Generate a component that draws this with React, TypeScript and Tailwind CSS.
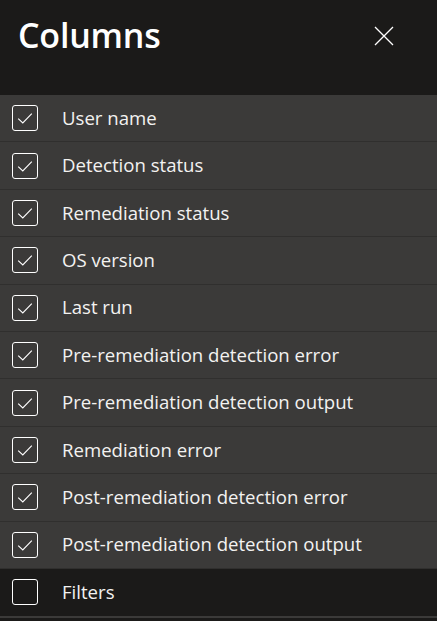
import React, { useState } from 'react';

type Column = { label: string; checked: boolean };

const initialColumns: Column[] = [
  { label: 'User name', checked: true },
  { label: 'Detection status', checked: true },
  { label: 'Remediation status', checked: true },
  { label: 'OS version', checked: true },
  { label: 'Last run', checked: true },
  { label: 'Pre-remediation detection error', checked: true },
  { label: 'Pre-remediation detection output', checked: true },
  { label: 'Remediation error', checked: true },
  { label: 'Post-remediation detection error', checked: true },
  { label: 'Post-remediation detection output', checked: true },
];

const CheckBox: React.FC<{ checked: boolean }> = ({ checked }) => (
  <span className="flex h-[26px] w-[26px] shrink-0 items-center justify-center rounded-[3px] border border-white">
    {checked && (
      <svg width="18" height="18" viewBox="0 0 18 18" fill="none">
        <path d="M2.2 9.6 L6.8 14 L15.8 4.6" stroke="#ffffff" strokeWidth="1.1" />
      </svg>
    )}
  </span>
);

export default function App() {
  const [columns, setColumns] = useState<Column[]>(initialColumns);
  const [filters, setFilters] = useState(false);

  const toggle = (i: number) => {
    setColumns(columns.map((c, idx) => (idx === i ? { ...c, checked: !c.checked } : c)));
  };

  return (
    <div
      className="min-h-[621px] w-full bg-[#1b1a19] text-white"
      style={{ fontFamily: '"Open Sans", "Noto Sans", sans-serif' }}
    >
      <div className="flex h-[95px] items-start justify-between pl-[18px] pr-[43px] pt-[11px]">
        <h1 className="text-[34px] font-semibold leading-[48px] tracking-[-0.2px]">Columns</h1>
        <button className="mt-[15px] flex h-[20px] w-[20px] items-center justify-center">
          <svg width="20" height="20" viewBox="0 0 20 20" fill="none">
            <path d="M1 1 L19 19 M19 1 L1 19" stroke="#ffffff" strokeWidth="1.3" />
          </svg>
        </button>
      </div>

      <ul>
        {columns.map((c, i) => (
          <li
            key={c.label}
            onClick={() => toggle(i)}
            className="flex h-[47.4px] cursor-pointer items-center gap-[24px] border-b border-[#302f2e] bg-[#3b3a39] pl-[12px]"
          >
            <CheckBox checked={c.checked} />
            <span className="text-[18.6px] leading-none text-[#f3f2f1]">{c.label}</span>
          </li>
        ))}
        <li
          onClick={() => setFilters(!filters)}
          className="flex h-[49px] cursor-pointer items-center gap-[24px] border-b-2 border-[#3b3a39] pl-[12px]"
        >
          <CheckBox checked={filters} />
          <span className="text-[18.6px] leading-none text-[#f3f2f1]">Filters</span>
        </li>
      </ul>
    </div>
  );
}
